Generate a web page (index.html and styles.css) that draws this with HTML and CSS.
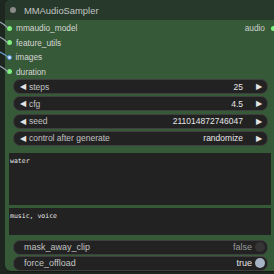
FILE: index.html
```html
<!DOCTYPE html>
<html lang="en">
<head>
    <meta charset="UTF-8">
    <title>MMAudioSampler</title>
    <link rel="stylesheet" href="styles.css">
</head>
<body>
    <div class="canvas">
        <!-- links coming in from the left -->
        <svg class="links" width="8" height="80" viewBox="0 0 8 80">
            <path d="M0 22 Q4 24 8 28" stroke="#9aa6b4" stroke-width="1.2" fill="none"/>
            <path d="M0 37 Q4 39 8 43" stroke="#9aa6b4" stroke-width="1.2" fill="none"/>
            <path d="M0 52 Q4 54 8 57" stroke="#6f9fd0" stroke-width="1.2" fill="none"/>
            <path d="M0 66 Q4 68 8 72" stroke="#9aa6b4" stroke-width="1.2" fill="none"/>
        </svg>

        <div class="node">
            <div class="title">
                <span class="title-dot"></span>
                <span class="title-text">MMAudioSampler</span>
            </div>

            <div class="body">
                <div class="slots">
                    <div class="inputs">
                        <div class="slot"><span class="dot"></span>mmaudio_model</div>
                        <div class="slot"><span class="dot"></span>feature_utils</div>
                        <div class="slot"><span class="dot ring"></span>images</div>
                        <div class="slot"><span class="dot"></span>duration</div>
                    </div>
                    <div class="outputs">
                        <div class="slot out">audio<span class="dot"></span></div>
                    </div>
                </div>

                <div class="widgets">
                    <div class="widget">
                        <span class="arrow left">&#9664;</span>
                        <span class="label">steps</span>
                        <span class="value">25</span>
                        <span class="arrow right">&#9654;</span>
                    </div>
                    <div class="widget">
                        <span class="arrow left">&#9664;</span>
                        <span class="label">cfg</span>
                        <span class="value">4.5</span>
                        <span class="arrow right">&#9654;</span>
                    </div>
                    <div class="widget">
                        <span class="arrow left">&#9664;</span>
                        <span class="label">seed</span>
                        <span class="value">211014872746047</span>
                        <span class="arrow right">&#9654;</span>
                    </div>
                    <div class="widget">
                        <span class="arrow left">&#9664;</span>
                        <span class="label">control after generate</span>
                        <span class="value">randomize</span>
                        <span class="arrow right">&#9654;</span>
                    </div>
                </div>

                <div class="text-box tall">water</div>
                <div class="text-box short">music, voice</div>

                <div class="toggles">
                    <div class="widget toggle">
                        <span class="label">mask_away_clip</span>
                        <span class="value muted">false</span>
                        <span class="knob"></span>
                    </div>
                    <div class="widget toggle">
                        <span class="label">force_offload</span>
                        <span class="value">true</span>
                        <span class="knob on"></span>
                    </div>
                </div>
            </div>
        </div>
    </div>
</body>
</html>
```

FILE: styles.css
```css
body {
    margin: 0;
    background-color: #1d2720;
    font-family: "Liberation Sans", Arial, sans-serif;
    font-size: 8.5px;
    color: #d6d6d6;
    overflow: hidden;
}

.canvas {
    position: relative;
    width: 274px;
    height: 274px;
}

.links {
    position: absolute;
    left: 0;
    top: 0;
}

.node {
    margin-left: 5px;
    width: 269px;
    height: 271px;
    border-radius: 6px 0 0 6px;
    overflow: hidden;
    background-color: #365937;
    box-shadow: 0 1px 0 #141a15;
}

.title {
    height: 20px;
    background-color: #26392a;
    display: flex;
    align-items: center;
    color: #c4c4c4;
    font-size: 9.4px;
}

.title-dot {
    width: 6px;
    height: 6px;
    border-radius: 50%;
    background-color: #8a8a8a;
    margin: 0 8px 0 5px;
}

.body {
    padding-top: 1px;
}

.slots {
    display: flex;
    justify-content: space-between;
    font-size: 8.3px;
}

.slot {
    height: 14.5px;
    display: flex;
    align-items: center;
    gap: 4px;
}

.dot {
    width: 5px;
    height: 5px;
    border-radius: 50%;
    background-color: #7ef07e;
    margin-left: 2px;
}

.dot.ring {
    width: 3px;
    height: 3px;
    background-color: #cfe6ff;
    border: 1.5px solid #4d8fe0;
    margin-left: 1.5px;
}

.out {
    gap: 6px;
    color: #cfcfcf;
}

.out .dot {
    margin-left: 0;
    margin-right: -2px;
}

.widgets {
    display: flex;
    flex-direction: column;
    gap: 2.3px;
    padding: 0 6px 0 8px;
}

.widget {
    height: 13px;
    border: 0.5px solid #3f3f3f;
    border-radius: 7px;
    background-color: #222222;
    display: flex;
    align-items: center;
    padding: 0 5px 0 6px;
}

.arrow {
    color: #e4e4e4;
    font-size: 8px;
}

.arrow.left {
    margin-right: 3px;
}

.arrow.right {
    margin-left: 13px;
}

.label {
    color: #c2c2c2;
}

.value {
    margin-left: auto;
    color: #e6e6e6;
}

.value.muted {
    color: #9a9a9a;
}

.text-box {
    margin: 7px 3px 0 4px;
    background-color: #222222;
    font-family: "DejaVu Sans Mono", monospace;
    font-size: 6.5px;
    color: #e8e8e8;
    padding: 4px 1px;
    box-sizing: border-box;
}

.text-box.tall {
    height: 52px;
}

.text-box.short {
    margin-top: 3px;
    height: 27px;
}

.toggles {
    display: flex;
    flex-direction: column;
    gap: 1px;
    padding: 0 6px 0 8px;
    margin-top: 5px;
}

.toggle {
    padding: 0 2px 0 10px;
    font-size: 9px;
}

.toggle .value {
    margin-right: 3px;
}

.knob {
    width: 10px;
    height: 10px;
    border-radius: 50%;
    background-color: #353535;
}

.knob.on {
    background-color: #a7b4c6;
}
```
